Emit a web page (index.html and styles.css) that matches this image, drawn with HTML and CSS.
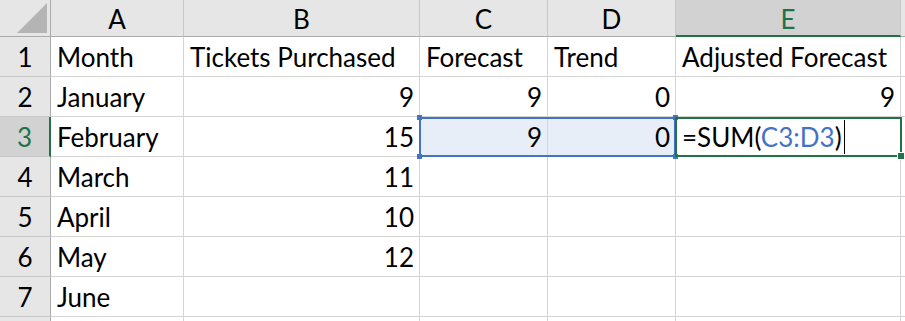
FILE: index.html
```html
<!DOCTYPE html>
<html lang="en">
<head>
  <meta charset="UTF-8" />
  <title>Book1 - Sheet1</title>
  <link rel="stylesheet" href="styles.css">
</head>
<body>

  <div class="sheet">
    <!-- column headers -->
    <div class="hd corner"><span class="tri"></span></div>
    <div class="hd col">A</div>
    <div class="hd col">B</div>
    <div class="hd col">C</div>
    <div class="hd col">D</div>
    <div class="hd col active">E</div>
    <div class="hd col"></div>

    <!-- row 1 -->
    <div class="hd row">1</div>
    <div class="cell">Month</div>
    <div class="cell">Tickets Purchased</div>
    <div class="cell">Forecast</div>
    <div class="cell">Trend</div>
    <div class="cell">Adjusted Forecast</div>
    <div class="cell"></div>

    <!-- row 2 -->
    <div class="hd row">2</div>
    <div class="cell">January</div>
    <div class="cell num">9</div>
    <div class="cell num">9</div>
    <div class="cell num">0</div>
    <div class="cell num">9</div>
    <div class="cell"></div>

    <!-- row 3 -->
    <div class="hd row active">3</div>
    <div class="cell">February</div>
    <div class="cell num">15</div>
    <div class="cell num ref">9</div>
    <div class="cell num ref">0</div>
    <div class="cell editing">=SUM(<span class="ref-text">C3:D3</span>)<span class="caret"></span></div>
    <div class="cell"></div>

    <!-- row 4 -->
    <div class="hd row">4</div>
    <div class="cell">March</div>
    <div class="cell num">11</div>
    <div class="cell"></div>
    <div class="cell"></div>
    <div class="cell"></div>
    <div class="cell"></div>

    <!-- row 5 -->
    <div class="hd row">5</div>
    <div class="cell">April</div>
    <div class="cell num">10</div>
    <div class="cell"></div>
    <div class="cell"></div>
    <div class="cell"></div>
    <div class="cell"></div>

    <!-- row 6 -->
    <div class="hd row">6</div>
    <div class="cell">May</div>
    <div class="cell num">12</div>
    <div class="cell"></div>
    <div class="cell"></div>
    <div class="cell"></div>
    <div class="cell"></div>

    <!-- row 7 -->
    <div class="hd row">7</div>
    <div class="cell">June</div>
    <div class="cell"></div>
    <div class="cell"></div>
    <div class="cell"></div>
    <div class="cell"></div>
    <div class="cell"></div>

    <!-- row 8 (only its top edge is in view) -->
    <div class="hd row last"></div>
    <div class="cell last"></div>
    <div class="cell last"></div>
    <div class="cell last"></div>
    <div class="cell last"></div>
    <div class="cell last"></div>
    <div class="cell last"></div>

    <!-- selection frames, laid over the grid cells -->
    <div class="range-box">
      <span class="knob tl"></span>
      <span class="knob tr"></span>
      <span class="knob bl"></span>
      <span class="knob br"></span>
    </div>
    <div class="active-box">
      <span class="fill-handle"></span>
    </div>
  </div>

</body>
</html>
```

FILE: styles.css
```css
:root {
  --grid-line: #d4d4d4;
  --head-bg: #e6e6e6;
  --head-active: #d2d2d2;
  --head-line: #ababab;
  --green: #217346;
  --blue: #4472c4;
  --range-fill: #e8eef8;
}

* {
  box-sizing: border-box;
  margin: 0;
  padding: 0;
}

html, body {
  height: 100%;
  overflow: hidden;
}

body {
  background: #fff;
  font-family: Lato, "Liberation Sans", sans-serif;
  font-size: 26px;
  color: #000;
}

.sheet {
  position: relative;
  display: grid;
  grid-template-columns: 51px 133px 236px 128px 128px 225px 1fr;
  grid-template-rows: 37px repeat(7, 40px) 1fr;
  width: 100%;
  height: 100%;
}

.cell {
  border-right: 1px solid var(--grid-line);
  border-bottom: 1px solid var(--grid-line);
  line-height: 39px;
  padding: 1px 6px 0;
  white-space: nowrap;
}

.cell.last,
.hd.last {
  border-bottom: none;
}

.cell.num {
  text-align: right;
  padding-right: 5px;
}

.cell.ref {
  background: var(--range-fill);
}

.ref-text {
  color: var(--blue);
}

.caret {
  display: inline-block;
  width: 1px;
  height: 34px;
  margin-left: 2px;
  background: #000;
  vertical-align: -7px;
}

/* headers */
.hd {
  background: var(--head-bg);
  text-align: center;
  border-right: 1px solid #c8c8c8;
  border-bottom: 1px solid var(--head-line);
}

.hd.col {
  line-height: 36px;
  padding-top: 1px;
}

.hd.row {
  border-right-color: var(--head-line);
  border-bottom-color: #c8c8c8;
  line-height: 39px;
  padding-top: 1px;
}

.hd.active {
  background: var(--head-active);
  color: var(--green);
}

.hd.col.active {
  border-bottom: 2px solid var(--green);
}

.hd.row.active {
  border-right: 2px solid var(--green);
}

.corner {
  position: relative;
  border-right-color: var(--head-line);
}

.corner .tri {
  position: absolute;
  right: 3px;
  bottom: 3px;
  width: 30px;
  height: 30px;
  background: #b4b4b4;
  clip-path: polygon(100% 0, 100% 100%, 0 100%);
}

/* selection frames: absolutely placed in their grid area so they
   don't take part in auto-placement of the cells */
.range-box {
  position: absolute;
  grid-column: 4 / 6;
  grid-row: 4 / 5;
  top: 0;
  left: -1px;
  right: 0;
  bottom: 0;
  border: 2px solid var(--blue);
}

.knob {
  position: absolute;
  width: 5px;
  height: 5px;
  background: var(--blue);
}

.knob.tl { left: -4px; top: -4px; }
.knob.tr { right: -4px; top: -4px; }
.knob.bl { left: -4px; bottom: -4px; }
.knob.br { right: -4px; bottom: -4px; }

.active-box {
  position: absolute;
  grid-column: 6 / 7;
  grid-row: 4 / 5;
  top: 0;
  left: -1px;
  right: -1px;
  bottom: 0;
  border: 2px solid var(--green);
}

.fill-handle {
  position: absolute;
  right: -4px;
  bottom: -4px;
  width: 6px;
  height: 6px;
  background: var(--green);
  outline: 1px solid #fff;
}
```
